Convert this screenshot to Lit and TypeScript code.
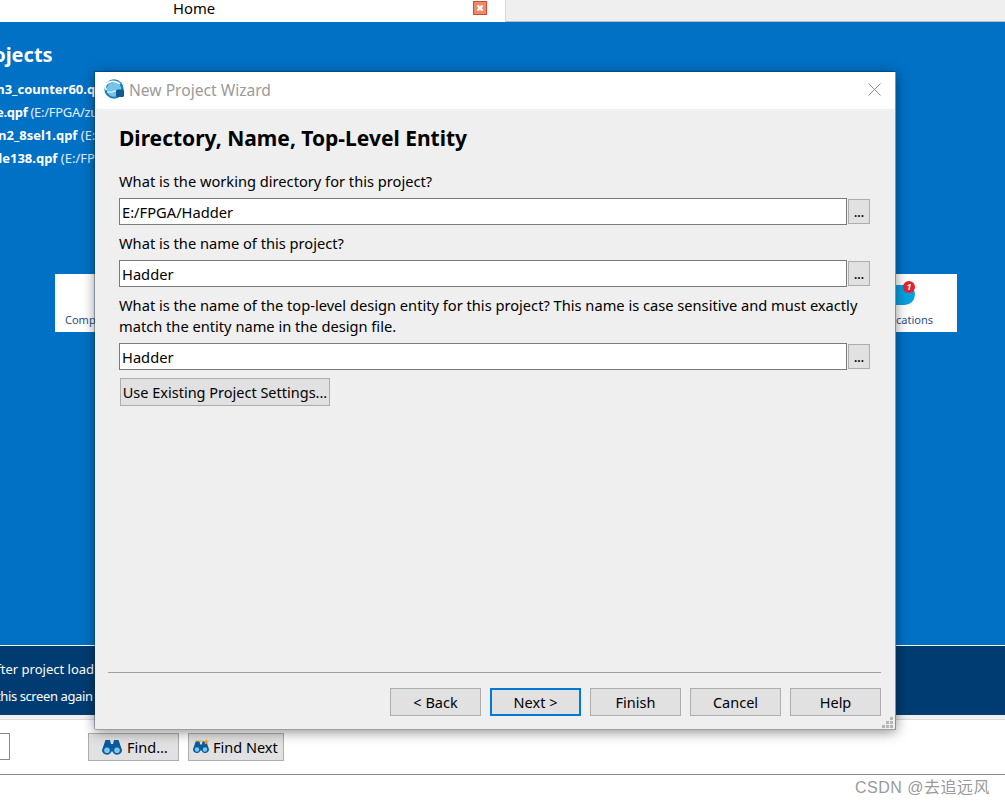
import { LitElement, html, css, svg } from "lit";
import { customElement } from "lit/decorators.js";

const binoculars = (star: boolean) => html`<svg class="bino ${star ? "small" : ""}" viewBox="0 -2 20 19">
  <path d="M3.500 1h4.500l1 4h2l1-4h4.500L20 11a4.800 4.800 0 0 1-9.300 1.500h-1.400A4.800 4.800 0 0 1 0 11z" fill="#0b5c9e"/>
  <circle cx="5" cy="11.300" r="2.800" fill="#7cc8f0"/><circle cx="15" cy="11.300" r="2.800" fill="#7cc8f0"/>
  ${star ? svg`<path d="M3 .5h10" stroke="#f5a623" stroke-width="1.200" stroke-dasharray="2 1"/><path d="M16.500 -2l1 2.400 2.500.3-1.900 1.700.6 2.500-2.200-1.300-2.200 1.300.6-2.500-1.900-1.700 2.500-.3z" fill="#f5a623"/>` : ""}
</svg>`;

@customElement("app-root")
export class AppRoot extends LitElement {
  static styles = css`
    :host { display: block; position: relative; width: 1005px; height: 805px; overflow: hidden; background: #fff; font-family: "Noto Sans", "Open Sans", sans-serif; color: #000; }
    .tabs { display: flex; height: 22px; }
    .tab { width: 506px; flex: none; display: flex; align-items: flex-start; background: #fff; font-size: 14.800px; box-sizing: border-box; border-right: 1px solid #d8d8d8; }
    .tab span { margin-left: 173px; flex: 1; line-height: 17px; }
    .close { width: 14px; height: 14px; margin: 1px 18px 0 0; background: #ea8a68; border: 1px solid #d9482c; box-sizing: border-box; display: flex; }
    .rest { flex: 1; background: #efefef; border-bottom: 1px solid #bdbdbd; }
    .blue { height: 623px; background: #0071c5; color: #fff; box-sizing: border-box; overflow: hidden; }
    .recent { margin-top: 19px; }
    .recent h2 { margin: 0 0 10px -102px; font-size: 20px; line-height: 27px; font-weight: 700; white-space: nowrap; }
    .recent div { font-size: 13px; line-height: 23px; white-space: nowrap; }
    .recent b { font-weight: 700; }
    .recent span { color: #e3eef8; }
    .r1 { margin-left: -8px; } .r2 { margin-left: -4px; letter-spacing: -.3px; } .r3 { margin-left: -2px; } .r4 { margin-left: -6px; }
    .cards { margin: 104px 0 0 55px; width: 902px; height: 58px; background: #fff; position: relative; color: #2d4f86; font-size: 11px; display: flex; justify-content: space-between; }
    .cards span { margin-top: 38px; white-space: nowrap; }
    .cards .l { margin-left: 10px; }
    .cards .n { margin-right: 24px; }
    .bubble { position: absolute; left: 836px; top: 11px; width: 24px; height: 20px; background: #05a0e0; border-radius: 0 10px 11px 5px; }
    .badge { position: absolute; left: 848px; top: 7px; width: 12px; height: 12px; border-radius: 50%; background: #e8212e; color: #fff; font-size: 9px; line-height: 12px; font-weight: 700; text-align: center; }
    .line { height: 1px; background: #fff; }
    .dark { height: 69px; background: #003c71; color: #fff; font-size: 13px; overflow: hidden; padding: 10px 0 0 0; box-sizing: border-box; }
    .dark div { line-height: 27px; white-space: nowrap; }
    .d1 { margin-left: -12px; } .d2 { margin-left: -4px; letter-spacing: -.4px; }
    .stripe { height: 5px; background: #efefef; border-bottom: 1px solid #dcdcdc; box-sizing: border-box; }
    .toolbar { height: 55px; border-bottom: 1px solid #8a8a8a; display: flex; align-items: flex-start; padding-top: 13px; box-sizing: border-box; }
    .field { width: 10px; height: 27px; border: 1px solid #888; border-left: 0; box-sizing: border-box; background: #fff; margin-right: 78px; }
    .tb { height: 28px; box-sizing: border-box; background: #e1e1e1; border: 1px solid #adadad; font-size: 14.500px; display: flex; align-items: center; white-space: nowrap; }
    .tb.a { width: 91px; margin-right: 9px; padding-left: 13px; gap: 5px; }
    .tb.b { width: 96px; padding-left: 4px; gap: 4px; }
    .bino { width: 20px; height: 19px; flex: none; margin-top: -1px; }
    .bino.small { width: 16px; height: 17px; }
    .wm { position: absolute; right: 15px; top: 774px; font-size: 16px; color: #9a9a9a; font-family: "Liberation Sans", "Noto Sans CJK SC", sans-serif; letter-spacing: 0.5px; white-space: nowrap; }

    .dialog { position: absolute; left: 95px; top: 72px; width: 801px; height: 658px; background: #efefef; box-sizing: border-box; border-right: 1px solid #8f8f8f; border-bottom: 1px solid #a0a0a0; box-shadow: -1px -1px 0 rgba(0,40,80,.35), 0 2px 12px rgba(0,0,0,.45); display: flex; flex-direction: column; }
    .title { height: 37px; flex: none; background: #fff; display: flex; align-items: center; padding: 0 0 2px 9px; box-sizing: border-box; color: #9a9a9a; font-size: 15.600px; gap: 4px; }
    .title span { flex: 1; }
    .x { margin-right: 14px; }
    .body { flex: 1; padding: 15px 13px 13px 24px; display: flex; flex-direction: column; position: relative; }
    h1 { margin: 0 0 18px; font-size: 21px; line-height: 29px; font-weight: 700; white-space: nowrap; }
    p { margin: 0 0 6px; font-size: 14.650px; line-height: 21px; width: 752px; }
    .row { display: flex; gap: 1px; align-items: center; margin-bottom: 8px; width: 751px; }
    .input { width: 728px; height: 27px; flex: none; box-sizing: border-box; border: 1px solid #7a7a7a; background: #fff; font-size: 14.700px; line-height: 27px; padding-left: 2px; }
    .dots { width: 22px; height: 25px; flex: none; box-sizing: border-box; border: 1px solid #adadad; background: #e1e1e1; font-size: 12px; font-weight: 600; line-height: 26px; text-align: center; }
    .btn { box-sizing: border-box; border: 1px solid #adadad; background: #e1e1e1; font-size: 14.500px; text-align: center; }
    .use { width: 210px; height: 28px; margin-left: 1px; line-height: 27px; white-space: nowrap; }
    .spacer { flex: 1; }
    .sep { height: 1px; background: #a0a0a0; margin: 0 0 15px -11px; width: 773px; flex: none; }
    .actions { display: flex; justify-content: flex-end; gap: 9px; width: 762px; }
    .actions .btn { width: 91px; height: 28px; line-height: 27px; }
    .actions .def { border: 2px solid #0078d7; line-height: 25px; }
    .grip { position: absolute; right: 2px; bottom: 1px; }
  `;

  render() {
    return html`
      <div class="tabs">
        <div class="tab"><span>Home</span>
          <i class="close"><svg viewBox="0 0 12 12" width="12" height="12"><path d="M3.500 3.500l5 5m0-5l-5 5" stroke="#fff" stroke-width="2.400"/></svg></i>
        </div>
        <div class="rest"></div>
      </div>
      <div class="blue">
        <div class="recent">
          <h2>Recent Projects</h2>
          <div class="r1"><b>m3_counter60.qpf</b></div>
          <div class="r2"><b>e.qpf</b> <span>(E:/FPGA/zuhe)</span></div>
          <div class="r3"><b>n2_8sel1.qpf</b> <span>(E:/FPGA)</span></div>
          <div class="r4"><b>de138.qpf</b> <span>(E:/FPGA)</span></div>
        </div>
        <div class="cards">
          <span class="l">Compile</span><span class="n">Notifications</span>
          <i class="bubble"></i><i class="badge">1</i>
        </div>
      </div>
      <div class="line"></div>
      <div class="dark">
        <div class="d1">After project load</div>
        <div class="d2">this screen again</div>
      </div>
      <div class="stripe"></div>
      <div class="toolbar">
        <div class="field"></div>
        <div class="tb a">${binoculars(false)}Find…</div>
        <div class="tb b">${binoculars(true)}Find Next</div>
      </div>
      <div class="wm">CSDN @去追远风</div>

      <div class="dialog">
        <div class="title">
          <svg width="21" height="21" viewBox="0 0 21 21">
            <circle cx="10" cy="10" r="9.700" fill="#1f7fb8"/>
            <circle cx="10" cy="10.500" r="7.300" fill="#74c4ec"/>
            <path d="M2.500 11a8 5.500 0 0 1 13.500-6" stroke="#fff" stroke-width="1.800" fill="none"/>
            <path d="M3 13a9 6 0 0 0 9-1.500" stroke="#fff" stroke-width="1" fill="none"/>
            <rect x="12" y="10.500" width="8" height="7.500" rx="1.500" fill="#0f5c94"/>
          </svg>
          <span>New Project Wizard</span>
          <svg class="x" width="13" height="13" viewBox="0 0 13 13"><path d="M.5.500l12 12m0-12l-12 12" stroke="#8a8a8a" fill="none"/></svg>
        </div>
        <div class="body">
          <h1>Directory, Name, Top-Level Entity</h1>
          <p>What is the working directory for this project?</p>
          <div class="row"><div class="input">E:/FPGA/Hadder</div><div class="dots">...</div></div>
          <p>What is the name of this project?</p>
          <div class="row"><div class="input">Hadder</div><div class="dots">...</div></div>
          <p>What is the name of the top-level design entity for this project? This name is case sensitive and must exactly match the entity name in the design file.</p>
          <div class="row"><div class="input">Hadder</div><div class="dots">...</div></div>
          <div class="btn use">Use Existing Project Settings...</div>
          <div class="spacer"></div>
          <div class="sep"></div>
          <div class="actions">
            <div class="btn">&lt; Back</div>
            <div class="btn def">Next &gt;</div>
            <div class="btn">Finish</div>
            <div class="btn">Cancel</div>
            <div class="btn">Help</div>
          </div>
          <svg class="grip" width="11" height="11" viewBox="0 0 11 11" fill="#b5b5b5">
            <rect x="8" y="0" width="3" height="3"/><rect x="4" y="4" width="3" height="3"/><rect x="8" y="4" width="3" height="3"/><rect x="0" y="8" width="3" height="3"/><rect x="4" y="8" width="3" height="3"/><rect x="8" y="8" width="3" height="3"/>
          </svg>
        </div>
      </div>
    `;
  }
}
